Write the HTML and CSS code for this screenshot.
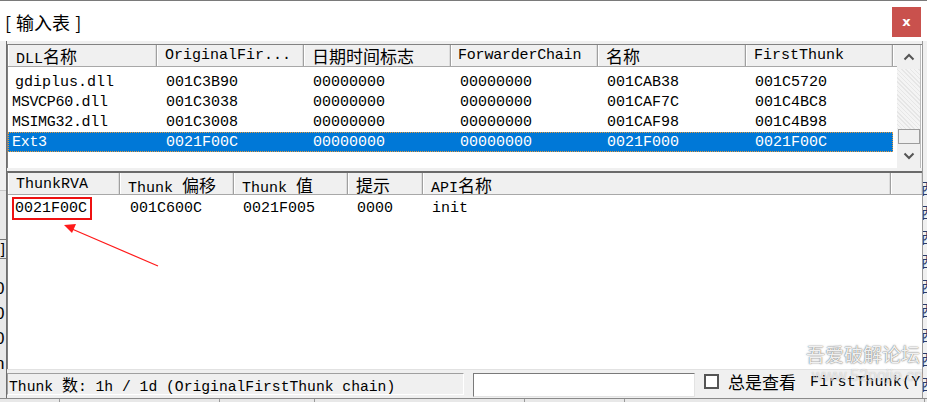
FILE: index.html
```html
<!DOCTYPE html>
<html lang="zh-CN">
<head>
<meta charset="utf-8">
<title>输入表</title>
<link rel="stylesheet" href="styles.css">
</head>
<body>
<div class="screen">
  <div class="titlebar">
    <span class="title">[ 输入表 ]</span>
    <div class="close">x</div>
  </div>
  <div class="main">
    <div class="bg-left">
      <div class="bl-top"></div>
      <div class="bl-box">]</div>
      <div class="bl-ch">0</div>
      <div class="bl-ch">0</div>
      <div class="bl-ch">0</div>
      <div class="bl-ch">n</div>
    </div>
    <div class="window">
      <div class="list upper">
        <div class="list-body">
          <div class="hdr">
            <div class="hc w1">DLL<span class="cjk">名称</span></div>
            <div class="hc w2">OriginalFir...</div>
            <div class="hc w3"><span class="cjk">日期时间标志</span></div>
            <div class="hc w4">ForwarderChain</div>
            <div class="hc w5"><span class="cjk">名称</span></div>
            <div class="hc w6">FirstThunk</div>
            <div class="hc wrest"></div>
          </div>
          <div class="rows">
            <div class="row"><div class="c w1 first">gdiplus.dll</div><div class="c w2">001C3B90</div><div class="c w3">00000000</div><div class="c w4">00000000</div><div class="c w5">001CAB38</div><div class="c w6">001C5720</div></div>
            <div class="row"><div class="c w1 first tight">MSVCP60.dll</div><div class="c w2">001C3038</div><div class="c w3">00000000</div><div class="c w4">00000000</div><div class="c w5">001CAF7C</div><div class="c w6">001C4BC8</div></div>
            <div class="row"><div class="c w1 first tight">MSIMG32.dll</div><div class="c w2">001C3008</div><div class="c w3">00000000</div><div class="c w4">00000000</div><div class="c w5">001CAF98</div><div class="c w6">001C4B98</div></div>
            <div class="row selected"><div class="c w1 first tight">Ext3</div><div class="c w2">0021F00C</div><div class="c w3">00000000</div><div class="c w4">00000000</div><div class="c w5">0021F000</div><div class="c w6">0021F00C</div></div>
          </div>
        </div>
        <div class="vscroll">
          <div class="sb-btn"><svg width="12" height="8" viewBox="0 0 12 8"><polyline points="1.5,6.5 6,2 10.5,6.5" fill="none" stroke="#555" stroke-width="2"/></svg></div>
          <div class="sb-track"></div>
          <div class="sb-thumb"></div>
          <div class="sb-btn down"><svg width="12" height="8" viewBox="0 0 12 8"><polyline points="1.5,1.5 6,6 10.5,1.5" fill="none" stroke="#555" stroke-width="2"/></svg></div>
        </div>
      </div>
      <div class="splitter"></div>
      <div class="list lower">
        <div class="hdr">
          <div class="hc v1">ThunkRVA</div>
          <div class="hc v2">Thunk <span class="cjk">偏移</span></div>
          <div class="hc v3">Thunk <span class="cjk">值</span></div>
          <div class="hc v4"><span class="cjk">提示</span></div>
          <div class="hc v5">API<span class="cjk">名称</span></div>
          <div class="hc vrest"></div>
        </div>
        <div class="rows">
          <div class="row">
            <div class="c v1 mark-cell"><span class="marked">0021F00C</span></div>
            <div class="c v2">001C600C</div>
            <div class="c v3">0021F005</div>
            <div class="c v4">0000</div>
            <div class="c v5">init</div>
          </div>
        </div>
      </div>
      <div class="statusbar">
        <div class="status-text">Thunk <span class="cjk-s">数</span>: 1h / 1d (OriginalFirstThunk chain)</div>
        <div class="status-input"></div>
        <div class="check"></div>
        <span class="check-label">总是查看</span>
        <span class="check-tail">FirstThunk(Y)</span>
      </div>
    </div>
    <div class="bg-right">
      <div class="br-ch">西</div><div class="br-ch">西</div><div class="br-ch">西</div><div class="br-ch">西</div><div class="br-ch">西</div><div class="br-ch">西</div><div class="br-ch">西</div><div class="br-ch">西</div><div class="br-ch">西</div>
    </div>
  </div>
  <div class="bg-bottom">
    <div class="bb-seg s1"></div><div class="bb-seg s2"></div><div class="bb-seg s3"></div><div class="bb-seg s4"></div><div class="bb-seg s5"></div><div class="bb-seg s6"></div>
  </div>
  <svg class="arrow" width="927" height="402" viewBox="0 0 927 402">
    <line x1="158" y1="266" x2="72" y2="229" stroke="#ff1a1a" stroke-width="1.2"/>
    <polygon points="64,225 76,224 72,233" fill="#ff1a1a"/>
  </svg>
  <div class="watermark">
    <div class="wm1">吾爱破解论坛</div>
    <div class="wm2">www.52pojie.cn</div>
  </div>
</div>
</body>
</html>
```
FILE: styles.css
```css
* { box-sizing: border-box; }
html, body { margin: 0; padding: 0; }
body {
  width: 927px;
  height: 402px;
  overflow: hidden;
  background: #f0f0f0;
  font-family: "Liberation Mono", "Noto Sans CJK SC", monospace;
  font-size: 15px;
  color: #000;
}
.screen {
  position: relative;
  width: 927px;
  height: 402px;
  display: flex;
  flex-direction: column;
}
.cjk { font-family: "Noto Sans CJK SC", sans-serif; font-size: 17px; }
.cjk-s { font-family: "Noto Sans CJK SC", sans-serif; font-size: 16px; }

/* title bar */
.titlebar {
  height: 41px;
  flex: none;
  background: #fff;
  border-top: 1px solid #7a7a7a;
  display: flex;
  align-items: center;
  justify-content: space-between;
  padding: 0 6px 0 5px;
}
.title {
  font-family: "Noto Sans CJK SC", sans-serif;
  font-size: 18px;
  word-spacing: 1px;
  margin-top: 1px;
}
.close {
  width: 29px;
  height: 30px;
  background: #c9514d;
  color: #fff;
  font-family: "DejaVu Sans", sans-serif;
  font-weight: bold;
  font-size: 13px;
  display: flex;
  align-items: center;
  justify-content: center;
  margin-top: 1px;
}

/* main row */
.main {
  display: flex;
  height: 357px;
  flex: none;
}
.bg-left {
  width: 7px;
  flex: none;
  background: #e9e9e9;
  border-right: 1px solid #6e6e6e;
  overflow: hidden;
  display: flex;
  flex-direction: column;
  font-family: "Liberation Sans", sans-serif;
  font-size: 17px;
}
.bl-top {
  height: 150px;
  border-bottom: 1px solid #c8c8c8;
  background: #f0f0f0;
}
.bl-box {
  margin-top: 48px;
  height: 20px;
  width: 14px;
  margin-left: -7px;
  border: 1px solid #777;
  line-height: 18px;
  font-size: 15px;
  text-align: right;
  padding-right: 1px;
}
.bl-ch {
  margin-left: -5px;
  height: 25px;
  line-height: 25px;
}
.bl-box + .bl-ch { margin-top: 17px; }

.window {
  width: 915px;
  flex: none;
  display: flex;
  flex-direction: column;
  padding-top: 3px;
  background: #f0f0f0;
  overflow: hidden;
}
.bg-right {
  flex: 1;
  background: #f0f0f0;
  overflow: hidden;
  display: flex;
  flex-direction: column;
  padding-top: 137px;
  font-family: "Noto Sans CJK SC", sans-serif;
  font-size: 15px;
  color: #2a3a6a;
  border-left: 1px solid #9a9a9a;
}
.br-ch {
  height: 25px;
  line-height: 20px;
  margin-left: -2px;
}

/* lists */
.list {
  background: #fff;
  border-left: 1px solid #7e7e7e;
}
.upper {
  height: 124px;
  flex: none;
  border-top: 1px solid #828282;
  display: flex;
}
.list-body {
  width: 889px;
  flex: none;
  display: flex;
  flex-direction: column;
}
.hdr {
  height: 22px;
  flex: none;
  display: flex;
  background: #f0f0f0;
  border-bottom: 1px solid #a8a8a8;
}
.hc {
  flex: none;
  height: 21px;
  line-height: 22px;
  padding-left: 8px;
  border-right: 1px solid #a0a0a0;
  box-shadow: inset -1px 0 0 #dcdcdc, inset 1px 0 0 #fff;
  white-space: nowrap;
  overflow: hidden;
}
.w1 { width: 149px; }
.w2 { width: 147px; }
.w3 { width: 147px; }
.w4 { width: 147px; }
.w5 { width: 148px; }
.w6 { width: 147px; }
.wrest { flex: 1; border-right: none; }
.upper .hc.w4 { padding-left: 7px; letter-spacing: -0.2px; }

.rows {
  flex: 1;
  background: #fff;
  padding-top: 5px;
}
.row {
  display: flex;
  height: 20px;
  line-height: 21px;
  width: 885px;
}
.c {
  flex: none;
  padding-left: 9px;
  white-space: nowrap;
  overflow: hidden;
}
.c.first { padding-left: 7px; }
.c.first.tight { padding-left: 4px; letter-spacing: -0.3px; }
.row.selected {
  background: #0078d7;
  color: #fff;
  outline: 1px dotted #e59a3c;
  outline-offset: -1px;
}

/* scrollbar */
.vscroll {
  width: 24px;
  flex: none;
  display: flex;
  flex-direction: column;
  background: #f0f0f0;
  border-right: 1px solid #bcbcbc;
}
.sb-btn {
  height: 24px;
  display: flex;
  align-items: center;
  justify-content: center;
  flex: none;
}
.sb-track {
  flex: 1;
  background-color: #f4f4f4;
  background-image: repeating-linear-gradient(45deg, #e6e6e6 0 1px, transparent 1px 3px);
}
.sb-thumb {
  height: 15px;
  flex: none;
  border: 1px solid #9c9c9c;
  background: #f0f0f0;
  margin-left: 1px;
}

.splitter {
  height: 3px;
  flex: none;
  background: #f0f0f0;
}

.lower {
  height: 198px;
  flex: none;
  border-top: 2px solid #6a6a6a;
  display: flex;
  flex-direction: column;
}
.v1 { width: 112px; }
.v2 { width: 114px; }
.v3 { width: 114px; }
.v4 { width: 75px; }
.v5 { width: 468px; }
.vrest { flex: 1; border-right: none; }
.lower .hc { line-height: 23px; }
.lower .rows { padding-top: 2px; }
.lower .row { height: 23px; line-height: 24px; }
.mark-cell { padding-left: 4px; }
.marked {
  display: inline-block;
  border: 2px solid #ee1111;
  height: 23px;
  line-height: 20px;
  padding: 0 3px 0 1px;
}
.lower .c.v2 { padding-left: 10px; }

/* status bar */
.statusbar {
  height: 29px;
  flex: none;
  display: flex;
  align-items: flex-start;
  padding-top: 3px;
  background: #f0f0f0;
  border-top: 1px solid #e2e2e2;
  overflow: hidden;
}
.status-text {
  flex: none;
  width: 457px;
  height: 22px;
  line-height: 20px;
  padding-left: 1px;
  border-top: 1px solid #a0a0a0;
  border-left: 1px solid #a0a0a0;
  border-bottom: 1px solid #fff;
  border-right: 1px solid #fff;
  white-space: nowrap;
  overflow: hidden;
  font-size: 14.7px;
}
.status-input {
  flex: none;
  width: 222px;
  height: 24px;
  margin-left: 9px;
  background: #fff;
  border-top: 1px solid #7a7a7a;
  border-left: 1px solid #7a7a7a;
  border-right: 1px solid #e3e3e3;
  border-bottom: 1px solid #e3e3e3;
}
.check {
  flex: none;
  width: 15px;
  height: 15px;
  margin-left: 9px;
  margin-top: 1px;
  border: 2px solid #555;
  background: #fff;
}
.check-label {
  flex: none;
  margin-left: 9px;
  font-family: "Noto Sans CJK SC", sans-serif;
  font-size: 17px;
  line-height: 18px;
  white-space: nowrap;
}
.check-tail {
  flex: 1;
  min-width: 0;
  overflow: hidden;
  margin-left: 14px;
  line-height: 20px;
  white-space: nowrap;
  letter-spacing: 0.2px;
}

.bg-bottom {
  flex: 1;
  display: flex;
  background: #e8e8e8;
  border-top: 1px solid #8a8a8a;
}
.bb-seg { height: 100%; border-right: 1px solid #9a9a9a; }
.s1 { width: 60px; }
.s2 { width: 160px; }
.s3 { width: 95px; }
.s4 { width: 210px; }
.s5 { width: 100px; }
.s6 { width: 300px; }

/* overlays */
.arrow {
  position: absolute;
  left: 0;
  top: 0;
  pointer-events: none;
}
.watermark {
  position: absolute;
  left: 806px;
  top: 341px;
  color: rgba(255, 255, 255, 0.92);
  text-shadow: 0 0 1px rgba(60, 60, 60, 0.8), 0 0 2px rgba(90, 90, 90, 0.5);
  pointer-events: none;
}
.wm1 {
  font-family: "Noto Sans CJK SC", sans-serif;
  font-size: 19px;
  line-height: 26px;
}
.wm2 {
  font-family: "Liberation Sans", sans-serif;
  font-size: 16px;
  line-height: 18px;
  margin-left: 6px;
  color: rgba(255, 255, 255, 0.6);
  text-shadow: 0 0 1px rgba(90, 90, 90, 0.4);
}
```
